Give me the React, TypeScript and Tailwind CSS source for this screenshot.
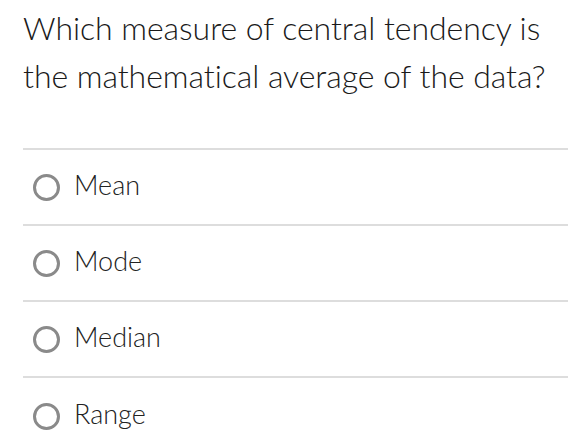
import React from 'react';

const options = ['Mean', 'Mode', 'Median', 'Range'];

export default function App() {
  return (
    <div className="w-[568px] h-[442px] overflow-hidden bg-white pl-[23px] pt-[4px] font-['Lato','Liberation_Sans',sans-serif] text-[#1a1a1a]">
      <h1 className="text-[32px] leading-[48px] font-light tracking-[-0.05px]">
        Which measure of central tendency is the mathematical average of the data?
      </h1>

      <div className="mt-[48px] border-t-2 border-[#dddddd]">
        {options.map((opt) => (
          <label
            key={opt}
            className="flex h-[76px] items-center gap-[14px] border-b-2 border-[#dddddd] pl-[10px] last:border-b-0"
          >
            <span className="h-[27px] w-[27px] shrink-0 rounded-full border-[3px] border-[#8a8a8a]" />
            <span className="-mt-[4px] text-[27px] font-light text-[#222]">{opt}</span>
          </label>
        ))}
      </div>
    </div>
  );
}
